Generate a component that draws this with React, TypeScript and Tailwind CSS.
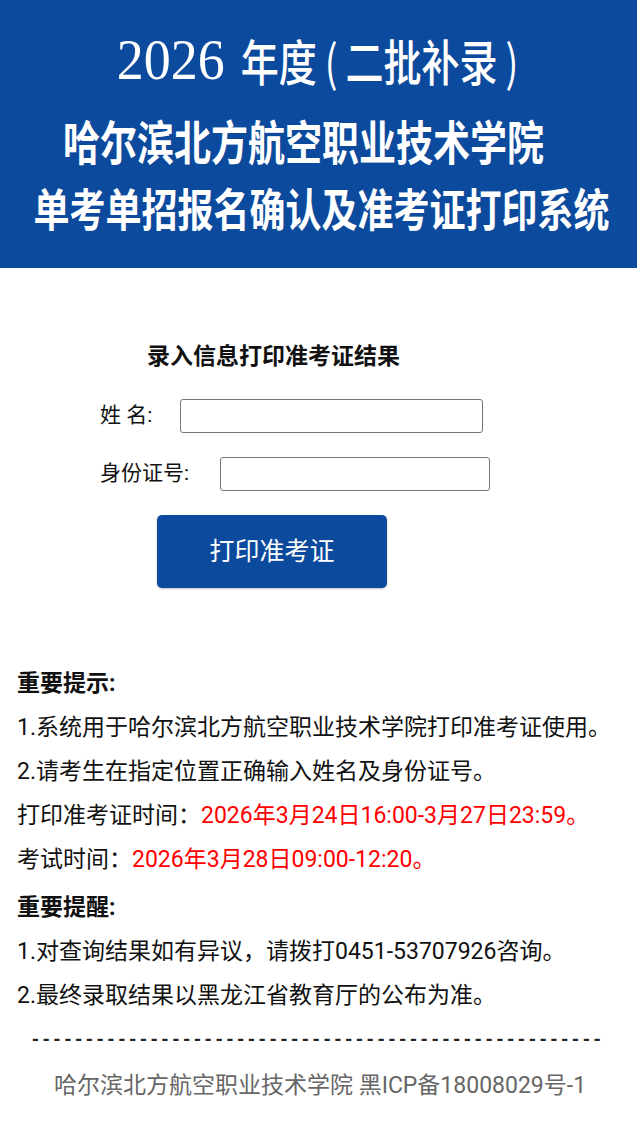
import React from 'react'

const cjk = "font-['Roboto','Noto_Sans_CJK_SC',sans-serif]"

function Banner() {
  return (
    <div className="w-[637px] h-[268px] bg-[#0b4a9d] flex flex-col items-center text-white">
      <div className="mt-[34px] h-[52px] flex items-center leading-none ml-[-2px]">
        <span className="text-[54px] font-['Liberation_Serif',serif] scale-y-105">2026</span>
        <span className="ml-[16px] text-[38px] font-['Noto_Sans_CJK_SC',sans-serif] font-medium scale-y-130">
          年度<span className="mx-[8px] font-normal">(</span>二批补录<span className="ml-[8px] font-normal">)</span>
        </span>
      </div>
      <div className="mt-[36px] ml-[-30px] text-[37px] leading-none font-bold font-['Noto_Sans_CJK_SC',sans-serif] scale-y-125">
        哈尔滨北方航空职业技术学院
      </div>
      <div className="mt-[30px] ml-[6px] text-[36px] leading-none font-bold font-['Noto_Sans_CJK_SC',sans-serif] scale-y-125">
        单考单招报名确认及准考证打印系统
      </div>
    </div>
  )
}

function Form() {
  return (
    <div className={`flex flex-col ${cjk} text-[#111]`}>
      <div className="mt-[74px] ml-[147px] text-[23px] leading-[30px] font-bold">录入信息打印准考证结果</div>
      <div className="mt-[27px] flex items-center ml-[100px]">
        <span className="text-[21px] w-[80px]">姓 名:</span>
        <input className="w-[303px] h-[34px] border border-[#777] rounded-[3px] bg-white" />
      </div>
      <div className="mt-[24px] flex items-center ml-[100px]">
        <span className="text-[21px] w-[120px]">身份证号:</span>
        <input className="w-[270px] h-[34px] border border-[#777] rounded-[3px] bg-white" />
      </div>
      <button className="mt-[24px] ml-[157px] w-[230px] h-[73px] rounded-[5px] bg-[#0b4a9d] text-white text-[25px] shadow-[0_1px_2px_rgba(0,0,0,0.25)]">
        打印准考证
      </button>
    </div>
  )
}

function Notes() {
  return (
    <div className={`mt-[80px] px-[17px] flex flex-col gap-[12px] text-[23px] leading-[32px] text-[#111] ${cjk}`}>
      <div className="font-bold">重要提示:</div>
      <div>1.系统用于哈尔滨北方航空职业技术学院打印准考证使用。</div>
      <div>2.请考生在指定位置正确输入姓名及身份证号。</div>
      <div>
        打印准考证时间：<span className="text-[#ff0000]">2026年3月24日16:00-3月27日23:59。</span>
      </div>
      <div>
        考试时间：<span className="text-[#ff0000]">2026年3月28日09:00-12:20。</span>
      </div>
      <div className="mt-[4px] font-bold">重要提醒:</div>
      <div>1.对查询结果如有异议，请拨打0451-53707926咨询。</div>
      <div>2.最终录取结果以黑龙江省教育厅的公布为准。</div>
    </div>
  )
}

export default function App() {
  return (
    <div className="w-[640px] h-[1132px] bg-white overflow-hidden flex flex-col">
      <Banner />
      <Form />
      <Notes />
      <div className="mt-[16px] ml-[30px] text-[18px] leading-[24px] font-bold text-[#222] font-['Liberation_Mono',monospace] whitespace-nowrap">
        {'-'.repeat(53)}
      </div>
      <div className={`mt-[19px] text-center text-[23px] leading-[30px] text-[#666] ${cjk}`}>
        哈尔滨北方航空职业技术学院 黑ICP备18008029号-1
      </div>
    </div>
  )
}
